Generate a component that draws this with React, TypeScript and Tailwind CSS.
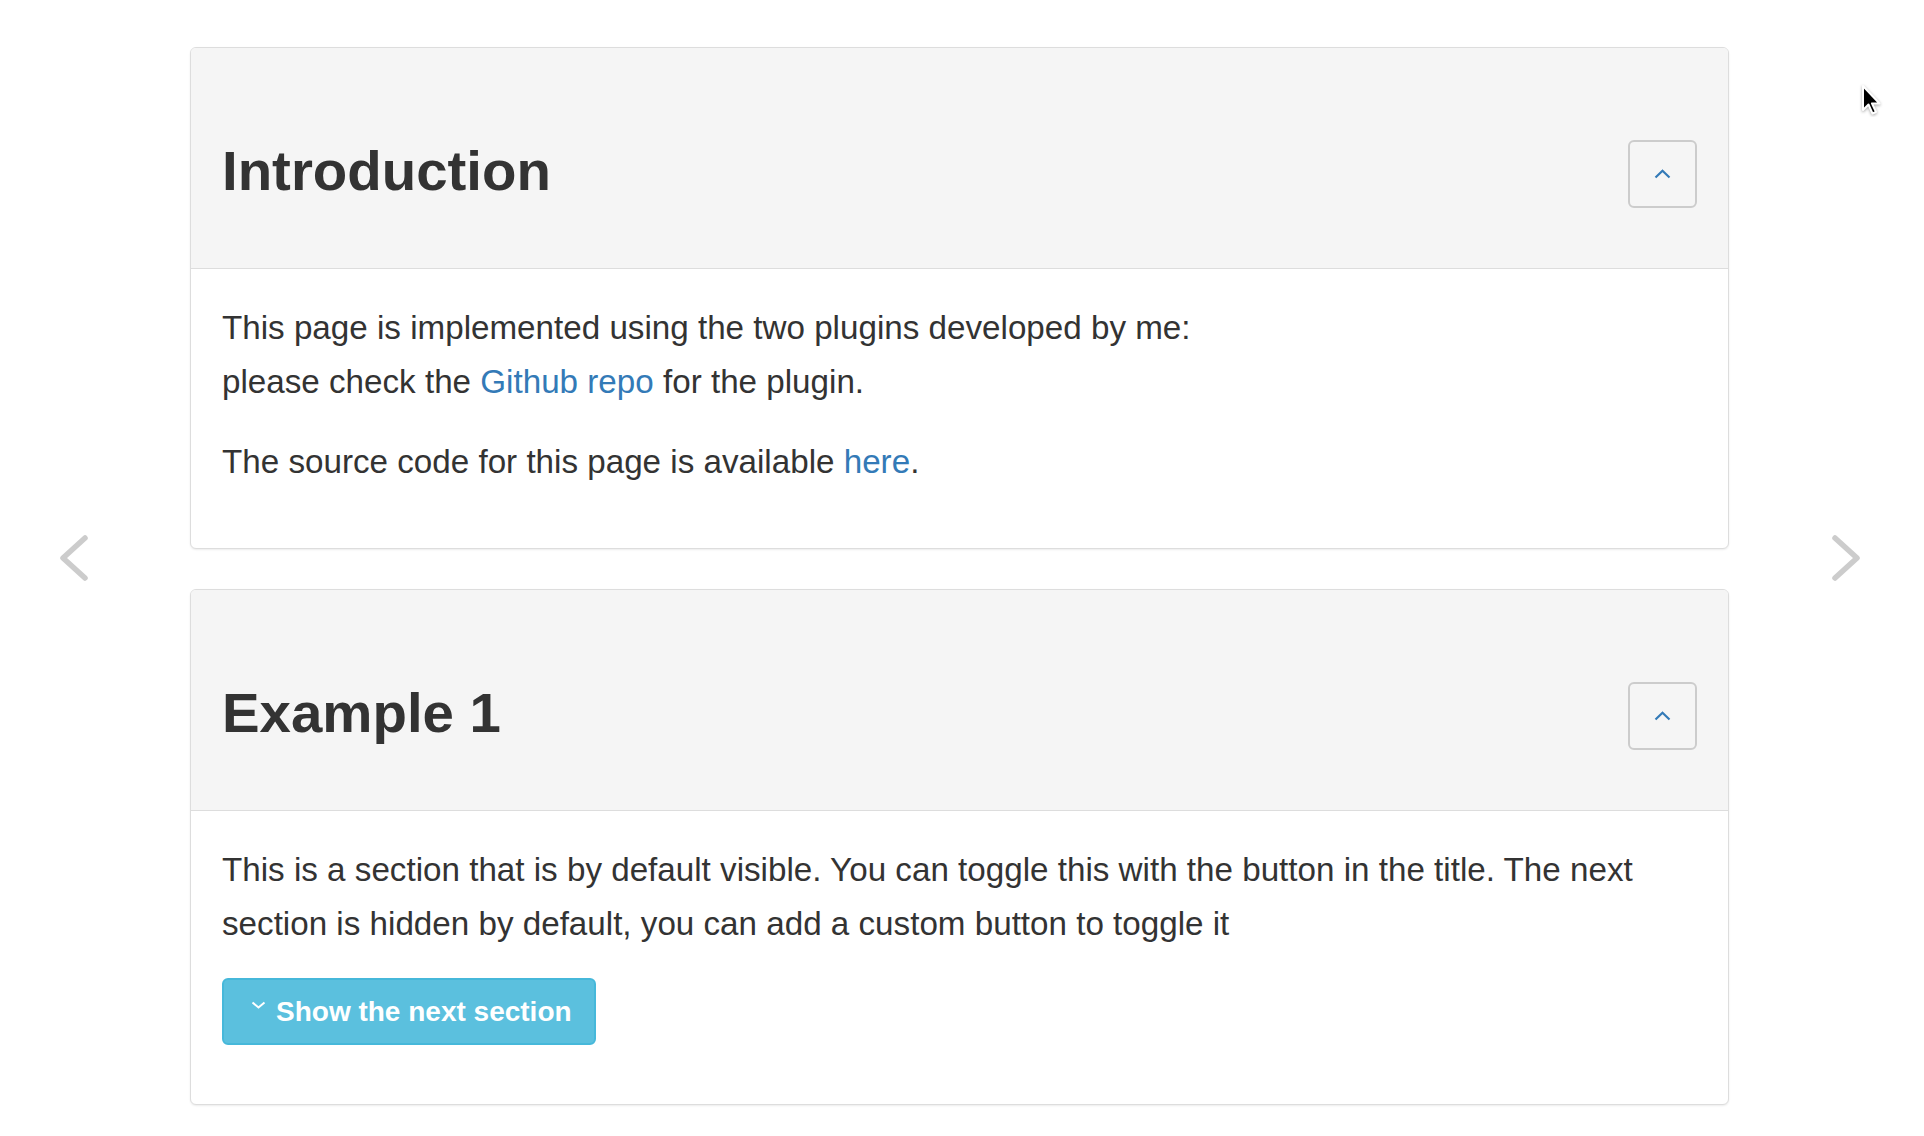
import type { ReactNode } from "react"

function ChevronUp() {
  return (
    <svg width="17" height="10" viewBox="0 0 17 10" fill="none">
      <path d="M1.5 8.5 L8.5 1.8 L15.5 8.5" stroke="#337ab7" strokeWidth="2.2" />
    </svg>
  )
}

function Panel({ title, children, className = "" }: { title: string; children: ReactNode; className?: string }) {
  return (
    <div className={`overflow-hidden rounded-[6px] border border-[#dddddd] bg-white shadow-[0_1px_2px_rgba(0,0,0,0.08)] ${className}`}>
      <div className="flex h-[221px] items-center justify-between border-b border-[#dddddd] bg-[#f5f5f5] pl-[31px] pr-[31px] pt-[31px]">
        <h1 className="mb-[5px] text-[56.4px] font-bold leading-none text-[#333333]">{title}</h1>
        <button className="flex h-[68px] w-[69px] items-center justify-center rounded-[6px] border-2 border-[#cccccc]">
          <ChevronUp />
        </button>
      </div>
      <div className="px-[31px] pb-[33px] pt-[32px]">{children}</div>
    </div>
  )
}

export default function App() {
  return (
    <div className="relative min-h-[1136px] bg-white font-['Liberation_Sans',Arial,sans-serif] text-[#333333]">
      <div className="ml-[190px] w-[1539px] pt-[47px]">
        <Panel title="Introduction">
          <p className="mb-[26px] text-[33.2px] leading-[54px]">
            This page is implemented using the two plugins developed by me:
            <br />
            please check the <a className="text-[#337ab7]">Github repo</a> for the plugin.
          </p>
          <p className="mb-[26px] text-[33.2px] leading-[54px]">
            The source code for this page is available <a className="text-[#337ab7]">here</a>.
          </p>
        </Panel>

        <Panel title="Example 1" className="mt-[40px]">
          <p className="mb-[26px] text-[33.2px] leading-[54px]">
            This is a section that is by default visible. You can toggle this with the button in the title. The next
            section is hidden by default, you can add a custom button to toggle it
          </p>
          <div className="mb-[26px] pt-[1px]">
            <button className="flex h-[67px] w-[374px] items-center rounded-[6px] border-2 border-[#46b8da] bg-[#5bc0de] pl-[27px] text-[28px] font-bold text-white">
              <svg width="15" height="8" viewBox="0 0 15 8" fill="none" className="mb-[14px] mr-[10px]">
                <path d="M1.5 1.5 L7.5 6.5 L13.5 1.5" stroke="white" strokeWidth="2" />
              </svg>
              Show the next section
            </button>
          </div>
        </Panel>
      </div>

      {/* carousel arrows */}
      <svg className="absolute left-[56px] top-[532px]" width="40" height="52" viewBox="0 0 40 52" fill="none">
        <path d="M29 6 L7 26 L29 46" stroke="#cccccc" strokeWidth="5.5" strokeLinecap="round" strokeLinejoin="round" />
      </svg>
      <svg className="absolute left-[1828px] top-[532px]" width="40" height="52" viewBox="0 0 40 52" fill="none">
        <path d="M7 6 L29 26 L7 46" stroke="#cccccc" strokeWidth="5.5" strokeLinecap="round" strokeLinejoin="round" />
      </svg>

      {/* mouse pointer */}
      <svg className="absolute left-[1859px] top-[83px]" width="24" height="34" viewBox="0 0 24 34">
        <path
          d="M4 3 L4 27 L9.5 21.5 L13.5 30.5 L17 29 L13 20.5 L20.5 20.5 Z"
          fill="black"
          stroke="white"
          strokeWidth="2"
          strokeLinejoin="round"
          style={{ filter: "drop-shadow(0 1px 1.5px rgba(0,0,0,0.35))" }}
        />
      </svg>
    </div>
  )
}
